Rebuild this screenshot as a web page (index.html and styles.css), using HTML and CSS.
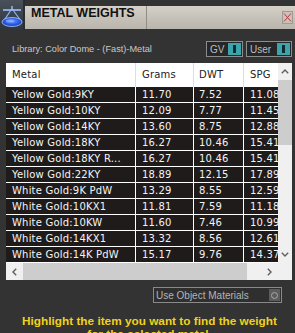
FILE: index.html
```html
<!DOCTYPE html>
<html>
<head>
<meta charset="utf-8">
<title>Metal Weights</title>
<link rel="stylesheet" href="styles.css">
</head>
<body>
<div class="window">
  <header class="titlebar">
    <div class="app-icon">
      <svg width="25" height="30" viewBox="0 0 25 30">
        <defs>
          <linearGradient id="ibg" x1="0" y1="0" x2="0" y2="1">
            <stop offset="0" stop-color="#48505a"/>
            <stop offset="1" stop-color="#2f353c"/>
          </linearGradient>
          <radialGradient id="dish" cx="0.5" cy="0.4" r="0.6">
            <stop offset="0" stop-color="#6f9cff"/>
            <stop offset="0.6" stop-color="#2b5ae6"/>
            <stop offset="1" stop-color="#1a3aa8"/>
          </radialGradient>
        </defs>
        <rect width="25" height="30" fill="url(#ibg)"/>
        <rect x="23" y="0" width="2" height="30" fill="#2a2e33"/>
        <line x1="3" y1="10" x2="21" y2="10" stroke="#9cc2ff" stroke-width="1.6"/>
        <line x1="12" y1="6" x2="12" y2="10" stroke="#b8d4ff" stroke-width="1.2"/>
        <line x1="11" y1="10" x2="3" y2="22" stroke="#8fb6ff" stroke-width="1.2"/>
        <line x1="13" y1="10" x2="21" y2="21" stroke="#8fb6ff" stroke-width="1.2"/>
        <ellipse cx="12" cy="22" rx="10" ry="4.5" fill="url(#dish)" stroke="#a9c8ff" stroke-width="0.8"/>
        <ellipse cx="10" cy="21" rx="4" ry="1.5" fill="#9bbcff" opacity="0.6"/>
      </svg>
    </div>
    <div class="title-tab">
      <div class="title-text">METAL WEIGHTS</div>
      <div class="title-fill"></div>
      <div class="close-btn">
        <svg width="9" height="11" viewBox="0 0 9 11">
          <line x1="1" y1="1.5" x2="8" y2="9.5" stroke="#b83a3a" stroke-width="1"/>
          <line x1="8" y1="1.5" x2="1" y2="9.5" stroke="#b83a3a" stroke-width="1"/>
        </svg>
      </div>
    </div>
  </header>

  <div class="library-row">
    <span class="lib-label">Library: Color Dome - (Fast)-Metal</span>
    <div class="toggles">
      <div class="toggle toggle-gv"><span>GV</span><i class="switch"></i></div>
      <div class="toggle toggle-user"><span>User</span><i class="switch"></i></div>
    </div>
  </div>

  <div class="table-panel">
    <div class="grid-view">
      <div class="row head">
        <div class="cell c-metal">Metal</div>
        <div class="cell c-grams">Grams</div>
        <div class="cell c-dwt">DWT</div>
        <div class="cell c-spg">SPG</div>
      </div>
      <div class="row data"><div class="cell c-metal">Yellow Gold:9KY</div><div class="cell c-grams">11.70</div><div class="cell c-dwt">7.52</div><div class="cell c-spg">11.08</div></div>
      <div class="row data"><div class="cell c-metal">Yellow Gold:10KY</div><div class="cell c-grams">12.09</div><div class="cell c-dwt">7.77</div><div class="cell c-spg">11.45</div></div>
      <div class="row data"><div class="cell c-metal">Yellow Gold:14KY</div><div class="cell c-grams">13.60</div><div class="cell c-dwt">8.75</div><div class="cell c-spg">12.88</div></div>
      <div class="row data"><div class="cell c-metal">Yellow Gold:18KY</div><div class="cell c-grams">16.27</div><div class="cell c-dwt">10.46</div><div class="cell c-spg">15.41</div></div>
      <div class="row data"><div class="cell c-metal">Yellow Gold:18KY R...</div><div class="cell c-grams">16.27</div><div class="cell c-dwt">10.46</div><div class="cell c-spg">15.41</div></div>
      <div class="row data"><div class="cell c-metal">Yellow Gold:22KY</div><div class="cell c-grams">18.89</div><div class="cell c-dwt">12.15</div><div class="cell c-spg">17.89</div></div>
      <div class="row data"><div class="cell c-metal">White Gold:9K PdW</div><div class="cell c-grams">13.29</div><div class="cell c-dwt">8.55</div><div class="cell c-spg">12.59</div></div>
      <div class="row data"><div class="cell c-metal">White Gold:10KX1</div><div class="cell c-grams">11.81</div><div class="cell c-dwt">7.59</div><div class="cell c-spg">11.18</div></div>
      <div class="row data"><div class="cell c-metal">White Gold:10KW</div><div class="cell c-grams">11.60</div><div class="cell c-dwt">7.46</div><div class="cell c-spg">10.99</div></div>
      <div class="row data"><div class="cell c-metal">White Gold:14KX1</div><div class="cell c-grams">13.32</div><div class="cell c-dwt">8.56</div><div class="cell c-spg">12.61</div></div>
      <div class="row data"><div class="cell c-metal">White Gold:14K PdW</div><div class="cell c-grams">15.17</div><div class="cell c-dwt">9.76</div><div class="cell c-spg">14.37</div></div>
    </div>
    <div class="vscroll">
      <div class="sb-btn vs-btn">
        <svg width="8" height="5" viewBox="0 0 8 5"><polyline points="0.8,4.2 4,1 7.2,4.2" fill="none" stroke="#606060" stroke-width="1.4"/></svg>
      </div>
      <div class="vs-thumb"></div>
      <div class="sb-track"></div>
      <div class="sb-btn vs-btn">
        <svg width="8" height="5" viewBox="0 0 8 5"><polyline points="0.8,0.8 4,4 7.2,0.8" fill="none" stroke="#606060" stroke-width="1.4"/></svg>
      </div>
    </div>
    <div class="hscroll">
      <div class="sb-btn hs-btn">
        <svg width="5" height="8" viewBox="0 0 5 8"><polyline points="4.2,0.8 1,4 4.2,7.2" fill="none" stroke="#606060" stroke-width="1.4"/></svg>
      </div>
      <div class="hs-thumb"></div>
      <div class="sb-track"></div>
      <div class="sb-btn hs-btn">
        <svg width="5" height="8" viewBox="0 0 5 8"><polyline points="0.8,0.8 4,4 0.8,7.2" fill="none" stroke="#606060" stroke-width="1.4"/></svg>
      </div>
    </div>
    <div class="corner"></div>
  </div>

  <div class="options-row">
    <div class="option-box">
      <span>Use Object Materials</span>
      <i class="radio"><b></b></i>
    </div>
  </div>

  <p class="hint">Highlight the item you want to find the weight for the selected metal.</p>
</div>
</body>
</html>
```

FILE: styles.css
```css
html, body {
  margin: 0;
  padding: 0;
}

body {
  width: 295px;
  height: 333px;
  overflow: hidden;
  background: #333333;
  font-family: "Liberation Sans", Arial, sans-serif;
}

.window {
  display: flex;
  flex-direction: column;
}

/* ---------- title bar ---------- */
.titlebar {
  display: flex;
  height: 30px;
}

.app-icon {
  width: 25px;
  height: 30px;
  flex: none;
}

.app-icon svg {
  display: block;
}

.title-tab {
  flex: 1;
  display: flex;
  margin-top: 6px;
  height: 23px;
  background: linear-gradient(#d5d1c9, #c3bfb7 60%, #bab6ae);
}

.title-text {
  box-sizing: border-box;
  width: 122px;
  padding-left: 6px;
  border-right: 1px solid #8f8c86;
  font-weight: bold;
  font-size: 12.5px;
  line-height: 14px;
  color: #111111;
  white-space: nowrap;
}

.title-fill {
  flex: 1;
}

.close-btn {
  box-sizing: border-box;
  width: 11px;
  height: 13px;
  margin: 5px 2px 0 0;
  background: #c9c1ba;
  border: 1px solid #a19a93;
  display: flex;
  align-items: center;
  justify-content: center;
}

.close-btn svg {
  display: block;
}

/* ---------- library row ---------- */
.library-row {
  display: flex;
  align-items: center;
  height: 16px;
  margin-top: 11px;
  padding: 0 3px 0 12px;
}

.lib-label {
  flex: 1;
  font-size: 9.2px;
  color: #c9c9c9;
  white-space: nowrap;
}

.toggles {
  display: flex;
  gap: 3px;
}

.toggle {
  box-sizing: border-box;
  height: 16px;
  display: flex;
  align-items: center;
  border: 1px solid #8c8c8c;
  background: #272727;
  padding-left: 3px;
  font-size: 10px;
  color: #bdbdbd;
}

.toggle-gv {
  width: 37px;
}

.toggle-user {
  width: 46px;
}

.switch {
  position: relative;
  margin-left: auto;
  margin-right: 1px;
  width: 13px;
  height: 12px;
  background: #3aa5ad;
}

.switch::after {
  content: "";
  position: absolute;
  left: 5px;
  top: 2px;
  width: 3px;
  height: 8px;
  background: #16282a;
}

/* ---------- table ---------- */
.table-panel {
  margin: 6px 0 0 6px;
  width: 286px;
  height: 217px;
  display: grid;
  grid-template-columns: 272px 14px;
  grid-template-rows: 200px 17px;
  background: #ffffff;
}

.grid-view {
  overflow: hidden;
  background: #ffffff;
  font-family: "DejaVu Sans", Verdana, sans-serif;
  font-size: 10px;
  letter-spacing: 0.2px;
}

.row {
  display: flex;
  width: max-content;
  white-space: nowrap;
}

.cell {
  box-sizing: border-box;
  padding-left: 6px;
  overflow: hidden;
}

.c-metal { width: 130px; }
.c-grams { width: 58px; }
.c-dwt   { width: 50px; padding-left: 5px; }
.c-spg   { width: 50px; }

.head {
  height: 24px;
  background: #ffffff;
  color: #222222;
}

.head .cell {
  line-height: 24px;
  border-right: 1px solid #dedede;
}

.data {
  height: 16px;
  box-sizing: border-box;
  border-bottom: 1px solid #ffffff;
  background: #1f1b1b;
  color: #f4f4f4;
}

.data .cell {
  line-height: 15px;
  border-right: 1px solid #ffffff;
}

/* scrollbars */
.vscroll {
  display: flex;
  flex-direction: column;
  background: #f0f0f0;
}

.hscroll {
  display: flex;
  background: #f0f0f0;
}

.sb-btn {
  flex: none;
  display: flex;
  align-items: center;
  justify-content: center;
}

.sb-btn svg {
  display: block;
}

.vs-btn {
  height: 17px;
}

.hs-btn {
  width: 17px;
}

.sb-track {
  flex: 1;
}

.vs-thumb {
  height: 65px;
  background: #cdcdcd;
}

.hs-thumb {
  width: 224px;
  background: #cdcdcd;
}

.corner {
  background: #f0f0f0;
}

/* ---------- options ---------- */
.options-row {
  display: flex;
  justify-content: flex-end;
  margin-top: 7px;
  padding-right: 13px;
}

.option-box {
  box-sizing: border-box;
  width: 129px;
  height: 16px;
  display: flex;
  align-items: center;
  border: 1px solid #8a8a8a;
  background: #2f2f2f;
  padding-left: 2px;
  font-size: 10px;
  color: #b4b4b4;
  white-space: nowrap;
}

.radio {
  margin-left: auto;
  margin-right: 1px;
  width: 11px;
  height: 12px;
  background: #5c5c5c;
  display: flex;
  align-items: center;
  justify-content: center;
}

.radio b {
  box-sizing: border-box;
  width: 7px;
  height: 7px;
  border: 1px solid #a8a8a8;
  border-radius: 50%;
}

/* ---------- hint ---------- */
.hint {
  margin: 12px 0 0;
  padding: 0 12px 0 16px;
  text-align: center;
  font-weight: bold;
  font-size: 11.8px;
  line-height: 13px;
  color: #f0d21c;
}
```
